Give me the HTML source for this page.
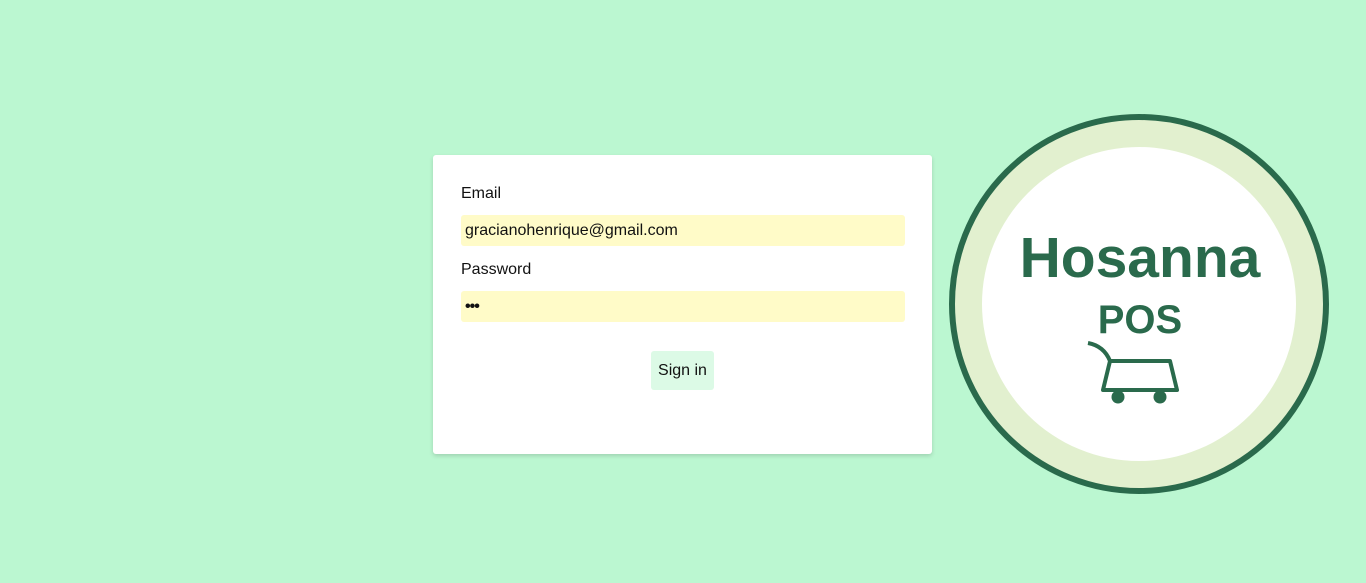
<!DOCTYPE html>
<html><head><style>
body{margin:0;width:1366px;height:583px;background:#bbf7d1;font-family:"Liberation Sans",sans-serif;position:relative;overflow:hidden}
.card{position:absolute;left:433px;top:155px;width:499px;height:299px;background:#fff;border-radius:3px;box-shadow:0 2px 4px rgba(0,0,0,.15)}
.lbl{position:absolute;left:28px;font-size:16px;color:#111}
.inp{position:absolute;left:28px;width:444px;height:31px;background:#fffbc8;border-radius:3px;font-size:16px;line-height:31px;padding-left:4px;box-sizing:border-box;color:#111}
.btn{position:absolute;left:218px;top:196px;width:63px;height:39px;background:#dcfae6;border-radius:3px;font-size:16px;line-height:39px;text-align:center;color:#111}
</style></head><body>
<div class="card">
<div class="lbl" style="top:30px">Email</div>
<div class="inp" style="top:60px">gracianohenrique@gmail.com</div>
<div class="lbl" style="top:106px">Password</div>
<div class="inp" style="top:136px;font-weight:bold;letter-spacing:-1px">•••</div>
<div class="btn">Sign in</div>
</div>
<svg style="position:absolute;left:0;top:0" width="1366" height="583">
<circle cx="1139" cy="304" r="187" fill="#e2f0cf" stroke="#2a6a4c" stroke-width="6"/>
<circle cx="1139" cy="304" r="157" fill="#fff"/>
<text x="1140" y="277" text-anchor="middle" font-family="Liberation Sans" font-weight="bold" font-size="57" fill="#2a6a4c">Hosanna</text>
<text x="1140" y="333" text-anchor="middle" font-family="Liberation Sans" font-weight="bold" font-size="40" fill="#2a6a4c">POS</text>
<path d="M1088 343 Q1104 346 1110 361 L1170 361 L1177 390 L1103 390 L1110 361" fill="none" stroke="#2a6a4c" stroke-width="4" stroke-linejoin="round"/>
<circle cx="1118" cy="397" r="6.5" fill="#2a6a4c"/>
<circle cx="1160" cy="397" r="6.5" fill="#2a6a4c"/>
</svg>
</body></html>
